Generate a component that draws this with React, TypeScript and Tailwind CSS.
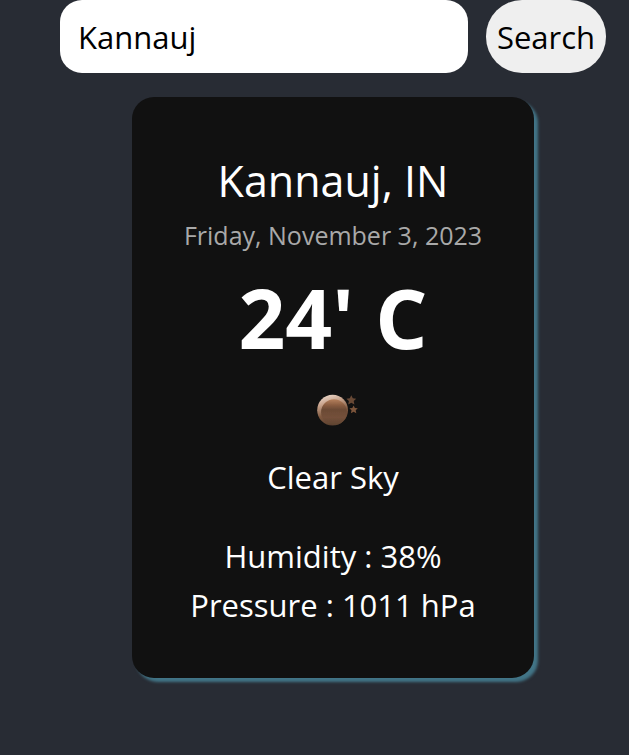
import { useState } from "react";

function NightIcon() {
  return (
    <svg viewBox="0 0 80 80" className="size-20" role="img" aria-label="Clear night">
      <defs>
        <linearGradient id="rim" x1="0.3" y1="0" x2="0.6" y2="1">
          <stop offset="0" stopColor="#ead6c9" />
          <stop offset="0.25" stopColor="#c9a48d" />
          <stop offset="0.6" stopColor="#7f583f" />
          <stop offset="1" stopColor="#553c2b" />
        </linearGradient>
        <linearGradient id="face" x1="0" y1="0" x2="0" y2="1">
          <stop offset="0" stopColor="#b5805c" />
          <stop offset="0.25" stopColor="#85593e" />
          <stop offset="0.4" stopColor="#6b4a35" />
          <stop offset="0.7" stopColor="#74503a" />
          <stop offset="1" stopColor="#5f4431" />
        </linearGradient>
        <filter id="soft" x="-20%" y="-20%" width="140%" height="140%">
          <feGaussianBlur stdDeviation="0.7" />
        </filter>
      </defs>
      <g filter="url(#soft)">
        <circle cx="39.6" cy="37.2" r="15.4" fill="url(#rim)" />
        <circle cx="41" cy="39.2" r="12.9" fill="url(#face)" />
        <path
          d="M58.3 22.2l1.5 3.1 3.4.4-2.5 2.3.7 3.4-3.1-1.7-3.1 1.7.7-3.4-2.5-2.3 3.4-.4z"
          fill="#684936"
        />
        <path
          d="M60.6 32.4l1.3 2.6 2.9.3-2.1 2 .6 2.9-2.7-1.5-2.7 1.5.6-2.9-2.1-2 2.9-.3z"
          fill="#7c543b"
        />
      </g>
    </svg>
  );
}

export default function App() {
  const [city, setCity] = useState("Kannauj");

  return (
    <div className="min-h-screen bg-[#282c34] pr-[23px] pl-[60px] font-['Open_Sans','Noto_Sans',sans-serif] text-[31px] leading-[49px] text-white">
      <form className="flex gap-[18px] text-black" onSubmit={(e) => e.preventDefault()}>
        <input
          type="text"
          aria-label="City"
          value={city}
          onChange={(e) => setCity(e.target.value)}
          className="min-w-0 flex-1 rounded-[22px] bg-white px-[18px] pt-[13px] pb-[11px] outline-none"
        />
        <button type="submit" className="w-[120px] rounded-[36px] bg-[#efefef] pt-[13px] pb-[11px] text-center whitespace-nowrap">
          Search
        </button>
      </form>

      <main className="mx-auto mt-6 flex max-w-[402px] flex-col items-center rounded-[22px] bg-[#111] pt-[54px] pb-12 text-center shadow-[4px_4px_3px_#427587]">
        <h1 className="text-[43px] leading-[60px]">Kannauj, IN</h1>
        <p className="mt-1.5 text-[25px] leading-9 text-[#a9a9a9]">Friday, November 3, 2023</p>
        <p className="mt-2 text-[82px] leading-[112px] font-bold">24' C</p>
        <NightIcon />
        <p>Clear Sky</p>
        <p className="mt-[30px]">Humidity : 38%</p>
        <p>Pressure : 1011 hPa</p>
      </main>
    </div>
  );
}
